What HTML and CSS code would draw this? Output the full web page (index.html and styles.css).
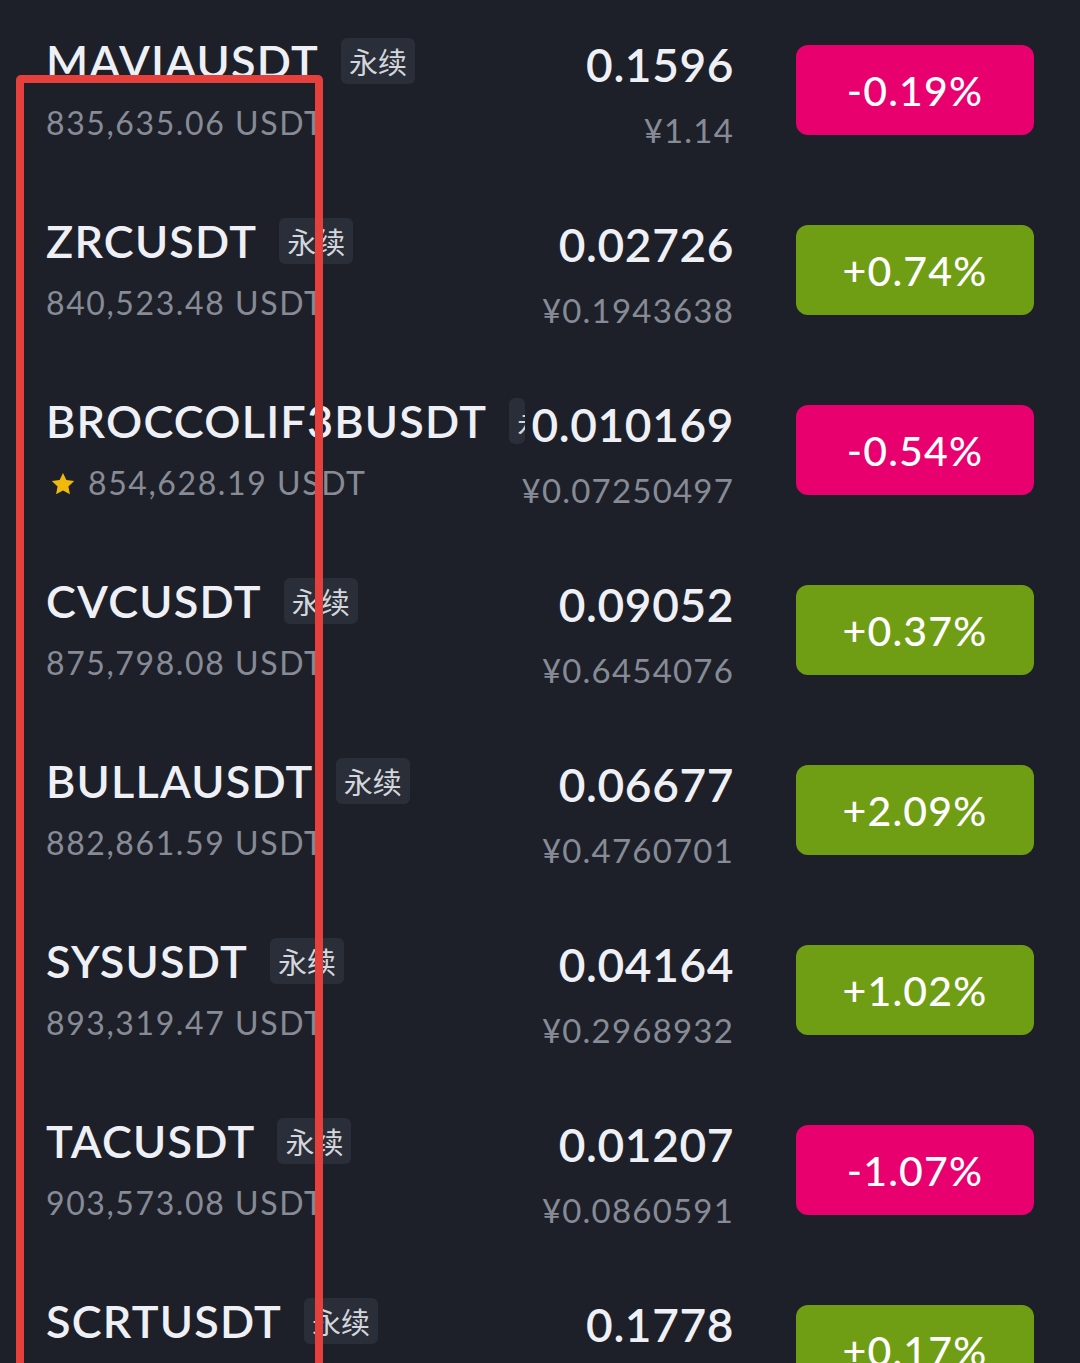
FILE: index.html
```html
<!DOCTYPE html>
<html>
<head>
  <meta charset="UTF-8">
  <meta name="viewport" content="width=device-width, initial-scale=1.0">
  <title>合约行情</title>
  <link rel="stylesheet" href="styles.css">
</head>
<body>
  <div class="market">
    <!-- 行情列表 -->
    <div class="row">
      <div class="coin">
        <div class="name-line"><span class="name">MAVIAUSDT</span><span class="tag">永续</span></div>
        <div class="volume">835,635.06 USDT</div>
      </div>
      <div class="price">
        <div class="last">0.1596</div>
        <div class="cny">¥1.14</div>
      </div>
      <div class="change down">-0.19%</div>
    </div>

    <div class="row">
      <div class="coin">
        <div class="name-line"><span class="name">ZRCUSDT</span><span class="tag">永续</span></div>
        <div class="volume">840,523.48 USDT</div>
      </div>
      <div class="price">
        <div class="last">0.02726</div>
        <div class="cny">¥0.1943638</div>
      </div>
      <div class="change up">+0.74%</div>
    </div>

    <div class="row">
      <div class="coin">
        <div class="name-line"><span class="name">BROCCOLIF3BUSDT</span><span class="tag">永续</span></div>
        <div class="volume">
          <svg class="star" viewBox="0 0 24 24" width="26" height="26"><path d="M12 1.8l3.1 6.6 7.2.9-5.3 5 1.4 7.1L12 17.9l-6.4 3.5L7 14.3l-5.3-5 7.2-.9z" fill="#f0b90b"/></svg>
          854,628.19 USDT
        </div>
      </div>
      <div class="price">
        <div class="last">0.010169</div>
        <div class="cny">¥0.07250497</div>
      </div>
      <div class="change down">-0.54%</div>
    </div>

    <div class="row">
      <div class="coin">
        <div class="name-line"><span class="name">CVCUSDT</span><span class="tag">永续</span></div>
        <div class="volume">875,798.08 USDT</div>
      </div>
      <div class="price">
        <div class="last">0.09052</div>
        <div class="cny">¥0.6454076</div>
      </div>
      <div class="change up">+0.37%</div>
    </div>

    <div class="row">
      <div class="coin">
        <div class="name-line"><span class="name">BULLAUSDT</span><span class="tag">永续</span></div>
        <div class="volume">882,861.59 USDT</div>
      </div>
      <div class="price">
        <div class="last">0.06677</div>
        <div class="cny">¥0.4760701</div>
      </div>
      <div class="change up">+2.09%</div>
    </div>

    <div class="row">
      <div class="coin">
        <div class="name-line"><span class="name">SYSUSDT</span><span class="tag">永续</span></div>
        <div class="volume">893,319.47 USDT</div>
      </div>
      <div class="price">
        <div class="last">0.04164</div>
        <div class="cny">¥0.2968932</div>
      </div>
      <div class="change up">+1.02%</div>
    </div>

    <div class="row">
      <div class="coin">
        <div class="name-line"><span class="name">TACUSDT</span><span class="tag">永续</span></div>
        <div class="volume">903,573.08 USDT</div>
      </div>
      <div class="price">
        <div class="last">0.01207</div>
        <div class="cny">¥0.0860591</div>
      </div>
      <div class="change down">-1.07%</div>
    </div>

    <div class="row">
      <div class="coin">
        <div class="name-line"><span class="name">SCRTUSDT</span><span class="tag">永续</span></div>
        <div class="volume">912,004.55 USDT</div>
      </div>
      <div class="price">
        <div class="last">0.1778</div>
        <div class="cny">¥1.27</div>
      </div>
      <div class="change up">+0.17%</div>
    </div>

    <!-- 标注框 -->
    <div class="highlight"></div>
  </div>
</body>
</html>
```

FILE: styles.css
```css
body {
  margin: 0;
  background-color: #1d2029;
  font-family: Lato, "Noto Sans", "Noto Sans CJK SC", sans-serif;
  overflow: hidden;
}
.market {
  position: relative;
  padding: 0 46px;
}
.row {
  display: flex;
  align-items: flex-start;
  height: 180px;
}
.coin {
  flex: 1;
  min-width: 0;
  padding-top: 34px;
}
.name-line {
  display: flex;
  align-items: center;
  height: 54px;
  white-space: nowrap;
}
.name {
  color: #eef0f5;
  font-size: 45px;
  font-weight: 600;
  letter-spacing: 1.2px;
  flex-shrink: 0;
}
.tag {
  margin-left: 22px;
  min-width: 0;
  overflow: hidden;
  padding: 0 8px;
  height: 46px;
  line-height: 46px;
  border-radius: 6px;
  background-color: #2a2e38;
  color: #d3d6dc;
  font-family: "Noto Sans CJK SC", sans-serif;
  font-size: 29px;
  flex-shrink: 1;
}
.volume {
  display: flex;
  align-items: center;
  margin-top: 12px;
  height: 44px;
  color: #878b95;
  font-size: 32px;
  letter-spacing: 1.6px;
  white-space: nowrap;
}
.star {
  margin: 4px 12px 0 4px;
}
.price {
  padding-top: 39px;
  margin-right: -2px;
  text-align: right;
  white-space: nowrap;
}
.last {
  height: 52px;
  line-height: 52px;
  color: #eef0f5;
  font-size: 46px;
  font-weight: 600;
  letter-spacing: 0.6px;
}
.cny {
  margin-top: 17px;
  height: 44px;
  line-height: 44px;
  color: #878b95;
  font-size: 33px;
  letter-spacing: 1.2px;
}
.change {
  margin-top: 45px;
  margin-left: 64px;
  width: 238px;
  height: 90px;
  border-radius: 12px;
  color: #fff;
  font-size: 41px;
  font-weight: 500;
  letter-spacing: 1.2px;
  display: flex;
  align-items: center;
  justify-content: center;
  flex-shrink: 0;
}
.change.down {
  background-color: #e8006f;
}
.change.up {
  background-color: #6f9e14;
}
.highlight {
  position: absolute;
  left: 16px;
  top: 75px;
  width: 291px;
  height: 1400px;
  border: 8px solid #e6403d;
  border-radius: 5px;
}
```
